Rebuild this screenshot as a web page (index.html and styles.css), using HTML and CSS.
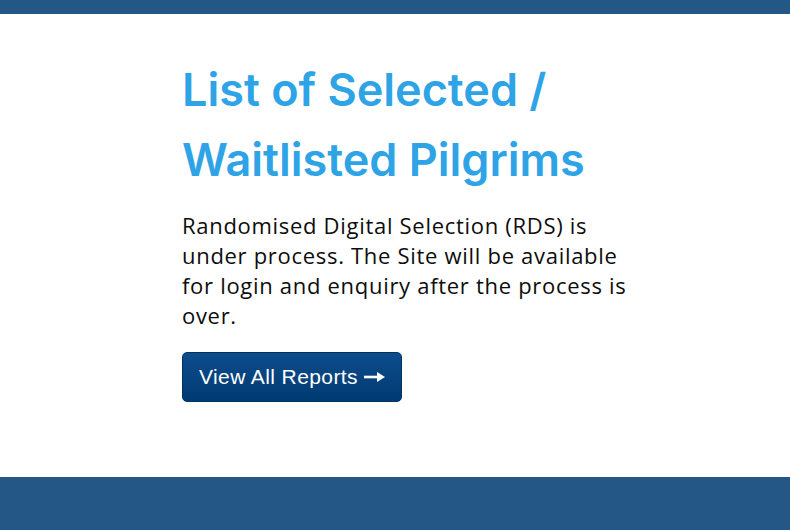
FILE: index.html
```html
<!DOCTYPE html>
<html lang="en">
<head>
<meta charset="utf-8">
<title>List of Selected / Waitlisted Pilgrims</title>
<link rel="stylesheet" href="styles.css">
</head>
<body>
<div class="topbar"></div>
<main class="main">
  <div class="content">
    <h1 class="title">List of Selected / Waitlisted Pilgrims</h1>
    <p class="text">Randomised Digital Selection (RDS) is under process. The Site will be available for login and enquiry after the process is over.</p>
    <a class="btn" href="#">View All Reports <svg class="arrow" width="21" height="12" viewBox="0 0 21 12" aria-hidden="true"><path d="M0 6h15" stroke="#fff" stroke-width="2.6" fill="none"/><path d="M13 1l8 5-8 5z" fill="#fff"/></svg></a>
  </div>
</main>
<footer class="footer"></footer>
</body>
</html>
```
FILE: styles.css
```css
html, body { margin: 0; padding: 0; }
body {
  width: 790px;
  height: 530px;
  display: flex;
  flex-direction: column;
  background: #fff;
  font-family: Inter, "Noto Sans", sans-serif;
  overflow: hidden;
}
.topbar { height: 14px; background: #245785; flex: none; }
.main { flex: 1; display: flex; justify-content: flex-start; padding-left: 182px; }
.content { width: 455px; padding-top: 41px; }
.title {
  margin: 0;
  font-size: 45px;
  line-height: 70px;
  font-weight: 600;
  color: #2ea3e6;
  letter-spacing: 0;
}
.text {
  margin: 15px 0 0;
  font-family: "Open Sans", sans-serif;
  font-size: 22px;
  letter-spacing: 0.7px;
  line-height: 30px;
  color: #0d0d0d;
}
.btn {
  display: inline-flex;
  align-items: center;
  gap: 6px;
  margin-top: 22px;
  height: 50px;
  box-sizing: border-box;
  padding: 0 16px 0 16px;
  border-radius: 5px;
  background: linear-gradient(#0d4d8c, #003a72);
  border: 1px solid #00325f;
  color: #fff;
  font-size: 21px;
  letter-spacing: 0.4px;
  text-decoration: none;
  font-family: "Liberation Sans", Arial, sans-serif;
}
.arrow { display: block; flex: none; }
.footer { height: 53px; background: #245785; flex: none; }
```
